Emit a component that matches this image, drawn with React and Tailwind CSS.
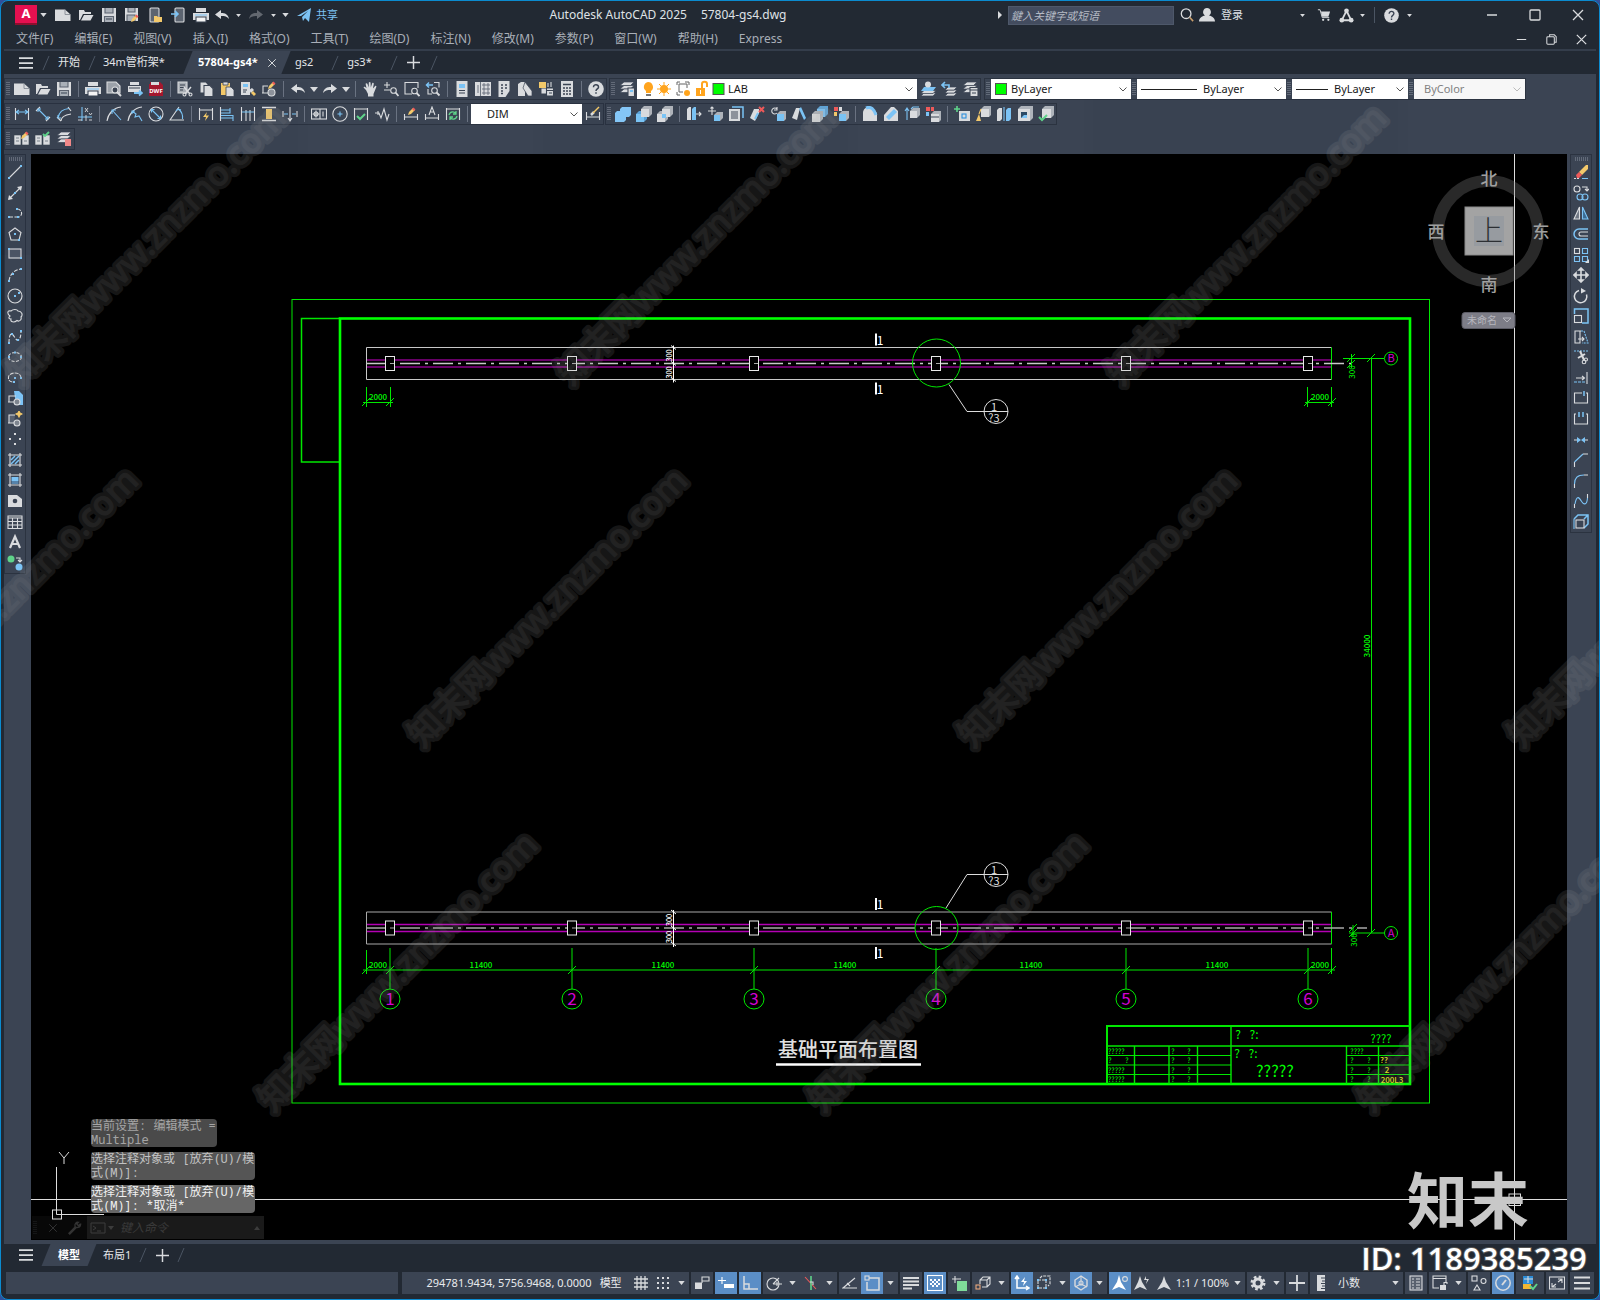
import { Fragment } from 'react';

const W = '#d9dbde';
const B = '#7cc3f5';
const G = '#5fd38a';
const Y = '#f3c96b';
const R = '#ee5a5a';
const D = '#3b4453';

const solid = { fill: W, stroke: 'none' };
const blue = { fill: B, stroke: 'none' };

const stack = (
  <>
    <path d="M5 1h10l-3.500 3.500H1z" fill={W} stroke={D} strokeWidth=".7" />
    <path d="M5 4.500h10L11.500 8H1z" fill={W} stroke={D} strokeWidth=".7" />
    <path d="M5 8h10l-3.500 3.500H1z" fill={W} stroke={D} strokeWidth=".7" />
  </>
);
const box = (x, y, s, front = W, side = '#aeb3ba') => (
  <>
    <path d={`M${x} ${y + 3}l3-3h${s}v${s}l-3 3z`} fill={side} stroke="none" />
    <rect x={x} y={y + 3} width={s} height={s} fill={front} stroke="none" />
  </>
);
const pencil = (x, y) => (
  <>
    <path d={`M${x} ${y + 7}l1-3 4-4 2 2-4 4z`} fill={Y} stroke="none" />
    <path d={`M${x + 4} ${y + 1}l1.500-1.500 2 2-1.500 1.500z`} fill={R} stroke="none" />
  </>
);
const hDim = <path d="M1.500 2v12M14.500 2v12" />;

const ICONS = {
  fresh: (
    <>
      <path d="M0 2.500h10l5.500 5V14H0z" {...solid} />
      <path d="M10 2.500v5h5.500" stroke="#7b828c" strokeWidth=".8" />
    </>
  ),
  open: <path d="M1 13V3h5l1 2h6v2H5L2 13z M6 8h9.500l-3 5.500H3z" {...solid} />,
  save: (
    <>
      <path d="M1 1h14v14H1z" {...solid} />
      <path d="M4 1v5h8V1M3.500 15V9.500h9V15" stroke="#5c6470" fill="#aab0b8" />
      <path d="M5 12h6" stroke={D} />
    </>
  ),
  saveas: (
    <>
      <path d="M1 1h13v13H1z" {...solid} />
      <path d="M4 1v4h7V1M3 14V8h8v6" stroke="#5c6470" fill="#aab0b8" />
      {pencil(7, 8)}
    </>
  ),
  mobopen: (
    <>
      <rect x="3" y="1" width="9" height="14" rx="1" fill="#5c6470" stroke={W} />
      <path d="M7 9h3l1 1h4v5H7z" fill={Y} stroke="none" />
    </>
  ),
  mobsave: (
    <>
      <rect x="5" y="1" width="9" height="14" rx="1" fill="#5c6470" stroke={W} />
      <path d="M1 7h6M5 4l3 3-3 3" stroke={B} strokeWidth="1.600" />
    </>
  ),
  print: (
    <>
      <path d="M3 1h10v4H3z M0 6h16v7H0z" {...solid} />
      <path d="M2 8h12" stroke={B} />
      <path d="M3 10h10v5H3z" fill="#f4f4f4" stroke={D} />
    </>
  ),
  preview: (
    <>
      <path d="M1 1h9l4 4v7H1z" fill="#9da2aa" stroke={W} />
      <circle cx="9" cy="9" r="3" fill={D} />
      <path d="M11 11l4 4" strokeWidth="2" />
    </>
  ),
  publish: (
    <>
      <path d="M3 1h9v3H3z M1 5h13v6H1z" {...solid} />
      <path d="M2 7h11" stroke={D} />
      <path d="M7 12h7M12 9.500l3 2.500-3 2.500" stroke={B} strokeWidth="1.800" />
    </>
  ),
  dwf: (
    <>
      <path d="M1 3h1V1h10l3 3v11H1z" fill="#a5192f" stroke="none" />
      <path d="M3 1h8v3H3z" {...solid} />
      <text x="8" y="12" fontSize="6" fontWeight="700" fill="#fff" stroke="none" textAnchor="middle">DWF</text>
    </>
  ),
  cut: (
    <>
      <path d="M1 1h9v11H1z" fill="#a9aeb5" stroke={W} />
      <path d="M3 4h5M3 6.500h5M3 9h3" stroke={D} />
      <path d="M7 6l6 7M14 6l-6 7" strokeWidth="1.500" />
      <circle cx="7.500" cy="13.500" r="1.500" /><circle cx="13.500" cy="13.500" r="1.500" />
    </>
  ),
  copyclip: (
    <>
      <path d="M2 1h6l2 2v9H2z" fill={W} stroke={D} />
      <path d="M6 4.500h6l3 3v8H6z" fill={W} stroke={D} />
    </>
  ),
  paste: (
    <>
      <path d="M2 2h9v12H2z" fill={Y} stroke="none" />
      <path d="M4 1h5v3H4z" fill={W} stroke={D} strokeWidth=".8" />
      <path d="M7 6h5l3 3v6.500H7z" fill={W} stroke={D} strokeWidth=".8" />
    </>
  ),
  match: (
    <>
      <path d="M1 1h9v13H1z" {...solid} />
      <path d="M3 3h5v3H3z" {...blue} />
      <path d="M3 9h4M3 11h3" stroke={D} />
      <path d="M9 9l3-2 2 2-3 3z" {...solid} /><path d="M11 12l2-2 3 3-2 2z" fill={Y} stroke="none" />
    </>
  ),
  blockedit: (
    <>
      <path d="M7 5H2v7h5M1 12h3" />
      <circle cx="10.500" cy="11.500" r="3.500" fill="#8d939b" />
      {pencil(7, 1)}
    </>
  ),
  undo: <path d="M7 3v3c4 0 7 1 8 6-2-2.500-4-3-8-3v3L1 7.500z" {...solid} />,
  redo: <path d="M9 3v3c-4 0-7 1-8 6 2-2.500 4-3 8-3v3l6-4.500z" {...solid} />,
  pan: (
    <path
      d="M4 9L1.500 6.500c.7-1.300 2-.5 3 .8L3.600 2.800c.6-1 1.600-.6 1.900.3l1.200 3.400.1-5c.6-.9 1.500-.7 1.700 0l.3 5 1.400-4.300c.7-.7 1.600-.3 1.600.5l-.9 4.800 2.300-2.600c.9-.3 1.500.4 1.100 1.200L11.500 13v2.500H6V13z"
      {...solid}
    />
  ),
  zoomrt: (
    <>
      <path d="M1 4h6M4 1v6M1 9h6" />
      <circle cx="10.500" cy="9.500" r="2.800" /><path d="M12.500 11.500l3 3.500" strokeWidth="1.800" />
    </>
  ),
  zoomwin: (
    <>
      <path d="M14 7V1.500H1V13h7" />
      <circle cx="10.500" cy="10" r="2.800" /><path d="M12.500 12l3 3" strokeWidth="1.800" />
    </>
  ),
  zoomprev: (
    <>
      <path d="M9 1.500h5v5M3 8v5h4" />
      <path d="M8 4H2M4 1.500L1.500 4 4 6.500" stroke={B} strokeWidth="1.500" />
      <circle cx="9.500" cy="9.500" r="2.800" /><path d="M11.500 11.500l3 3" strokeWidth="1.800" />
    </>
  ),
  props: (
    <>
      <path d="M2.500 0h11v16h-11z" {...solid} />
      <path d="M5 3h6v4H5z" {...blue} /><path d="M5 9.500h6M5 12h6" stroke={D} />
    </>
  ),
  dc: (
    <>
      <path d="M0 1h16v14H0z" {...solid} />
      <path d="M5.500 1v14M3 4v8M8 3h2v2H8zM12 3h2v2h-2zM8 7h2v2H8zM12 7h2v2h-2zM8 11h2v2H8zM12 11h2v2h-2z" stroke="#626a76" strokeWidth=".9" />
    </>
  ),
  palettes: (
    <>
      <path d="M2.500 0h11v10l-4 6h-7z" {...solid} />
      <path d="M5 4h2M9 4h2M5 7h2M9 7h2M5 10h2M5 12.500h2" stroke={D} strokeWidth="1.500" />
    </>
  ),
  sheet: (
    <>
      <path d="M1 3l3-2h4v14H1z" {...solid} />
      <path d="M8 1l7 9v5h-4L6 7z" fill={W} stroke={D} strokeWidth=".7" />
    </>
  ),
  markup: (
    <>
      <path d="M1 1h7v6H1z" fill={Y} stroke="none" /><path d="M10 2v4M13 1v5M4 8v4h5V8z" fill={W} />
      <path d="M8.500 7h7v8h-7z" fill={W} stroke={D} /><path d="M9 9.500h6M11 12h3" stroke={D} />
    </>
  ),
  calc: (
    <>
      <path d="M2 0h12v16H2z" {...solid} />
      <path d="M4 3.500h8M4 7h2M7 7h2M10 7h2M4 10h2M7 10h2M10 10h2M4 13h2M7 13h2M10 13h2" stroke={D} strokeWidth="1.300" />
    </>
  ),
  help: (
    <>
      <circle cx="8" cy="8" r="7.800" {...solid} />
      <path d="M5.500 6.200c0-3.600 5.200-3.200 5 0-.1 1.700-2.500 1.800-2.500 3.800M8 11.300v1.500" stroke={D} strokeWidth="1.500" />
    </>
  ),
  layers: (
    <>
      {stack}
      <path d="M9 7h6.500v8.500H9z" fill={W} stroke={D} /><path d="M11 9h3v2h-3z" {...blue} />
    </>
  ),
  laycur: (
    <>
      <path d="M4 12h12l-3 3H1z" fill={W} stroke={D} strokeWidth=".7" />
      <path d="M4 9.500h12l-3 3H1z" fill={W} stroke={D} strokeWidth=".7" />
      <path d="M4 6h12l-3 4H1z" {...blue} /><circle cx="8" cy="3.500" r="3" {...solid} />
    </>
  ),
  layprev: (
    <>
      <path d="M7 12h9l-3 3H4z" fill={W} stroke={D} strokeWidth=".7" />
      <path d="M7 9h9l-3 3H4z" fill={W} stroke={D} strokeWidth=".7" />
      <path d="M7 6h9l-3 3H4z" fill={W} stroke={D} strokeWidth=".7" />
      <path d="M1 4h7v3M4 1L1 4l3 3" stroke={B} strokeWidth="1.600" />
    </>
  ),
  laystate: (
    <>
      {stack}
      <path d="M8 6.500h8v9H8z" fill={W} stroke={D} /><path d="M8 9h8M10 12h4" stroke={D} />
    </>
  ),
  dimlin: <>{hDim}<path d="M2 6h12M5 4L2 6l3 2M11 4l3 2-3 2" stroke={B} /></>,
  dimali: (
    <>
      <path d="M1 5l4-4M11 15l4-4" />
      <path d="M3.500 3.500l9 9M3 6l0-3h3M13 10v3h-3" stroke={B} />
    </>
  ),
  dimarc: <><path d="M5 15c0-4 3-6 10-7M1 11l4 4M12 1l3 4" /><path d="M2 12c1-6 4-9 11-9.500M2 9v3h3" stroke={B} /></>,
  dimord: (
    <>
      <path d="M5 15V1M1 11h14" stroke={B} />
      <path d="M1 14h4M9 9v6M12 14h3M8 2l3 4M11 2L8 6M12 7l1.500 2L15 7" strokeWidth=".9" />
    </>
  ),
  dimrad: <><path d="M1 15C2 8 7 2 15 1" /><path d="M6 4l9 10M6 8V4h4" stroke={B} /></>,
  dimjog: <><path d="M1 15C2 8 7 2 15 1" /><path d="M5 5l4 3-1 3 4-1 3 5M5 8V5h3" stroke={B} /></>,
  dimdia: <><circle cx="8" cy="8" r="7" /><path d="M3 3l10 10M3.500 6.500v-3h3M12.500 9.500v3h-3" stroke={B} /></>,
  dimang: <><path d="M10 1L1 14h14" /><path d="M9 3c3 2 5 6 4.500 10M7 5l2-2 3 1" stroke={B} /></>,
  qdim: <>{hDim}<path d="M2 4h12" /><path d="M9 6l-4 5h3l-1 4 4-5.500H8z" fill={Y} stroke="none" /></>,
  dimbase: <><path d="M1.500 1v14" /><path d="M2 4h9M2 12h12M11 2v5h-9M14 9v6M2 9.500h12" stroke={B} /></>,
  dimcont: <><path d="M1.500 1v14M6 4v11M10 4v11M14.500 1v14" /><path d="M2 6h12" stroke={B} /></>,
  dimspace: <><path d="M1 1.500h14M1 14.500h14" strokeWidth="1.500" /><path d="M5 3h6v10H5z" fill={Y} stroke="none" /></>,
  dimbreak: <><path d="M1 5v6M15 5v6M8 1v14M6 12l2 3 2-3" /><path d="M2 8h4M10 8h4" stroke={B} /></>,
  tol: (
    <>
      <rect x="0.500" y="3" width="15" height="10" /><path d="M9 3v10M12 5.500v5" />
      <circle cx="5" cy="8" r="2" /><path d="M5 4.500v7M1.500 8h7" />
    </>
  ),
  center: <><circle cx="8" cy="8" r="7.200" /><path d="M8 5.500v5M5.500 8h5" stroke={B} /></>,
  inspect: <>{hDim}<path d="M2 3h12" /><path d="M4 10l3 3 5-5" stroke={G} strokeWidth="2" /></>,
  jogline: <path d="M1 7h4l2 5 3-9 3 11 2-6M4 5v4" />,
  dimedit: <><path d="M1.500 8v6M14.500 8v6M2 11h12" />{pencil(5, 2)}</>,
  dimtedit: <path d="M1.500 8v6M14.500 8v6M2 12h12M5 9l3-8 3 8M6 6h4" />,
  dimupd: <>{hDim}<path d="M2 3h12" /><path d="M4 9c1-4 6-4 7-1M12 10c-1 4-6 4-7 1M11 5v3H8M5 14v-3h3" stroke={G} strokeWidth="1.300" /></>,
  dimstyle: <><path d="M1.500 6v8M14.500 6v8M2 11h12" /><path d="M6 9l3-3" strokeWidth="2.500" /><path d="M8 7l6-6" stroke={Y} strokeWidth="1.500" /></>,
  union: <path d="M0 7l2-2h3V3l2-2h9v8l-2 2h-3v3l-2 2H0z" fill="#84c6f7" stroke="none" />,
  subtract: <>{box(0, 5, 8, B, '#5ea4d8')}{box(5, 0, 8)}</>,
  intersect: <>{box(0, 5, 8)}{box(5, 0, 8)}<rect x="5" y="8" width="4" height="4" {...blue} /></>,
  extrude: <><path d="M1 3l2-2h2v13H1z" {...solid} /><path d="M6 3l2-2h2v13H6z" {...blue} /><path d="M10 8h5M13 6l2 2-2 2" /></>,
  movef: <><path d="M5 1v8M1 5h8M3.500 2.500L5 1l1.500 1.500" />{box(7, 6, 6, B)}</>,
  offsetf: <><path d="M4 1h11v11" stroke={B} strokeWidth="1.500" /><rect x="2" y="4" width="9" height="10" fill="#8d939b" strokeWidth="2" /></>,
  deletef: <><path d="M1 12l4-9h5v4l-4 8z" {...solid} /><path d="M6 13l3-6" stroke={B} strokeWidth="2" /><path d="M10 1l5 5M15 1l-5 5" stroke={R} strokeWidth="2" /></>,
  rotatef: <><path d="M7 3a3 3 0 1 0 0 4M7 1v3H4" />{box(7, 5, 7, B)}</>,
  taperf: <><path d="M1 12l4-10h4L6 14z" {...solid} /><path d="M8 3l2-2 5 11-2 2z" {...blue} /></>,
  copyf: <>{box(5, 0, 8, B, '#5ea4d8')}{box(0, 5, 8)}</>,
  colorf: <><path d="M1 1h4v4H1z" fill={R} stroke="none" /><path d="M6 1h3v4H6z" {...solid} /><path d="M1 6h3v4H1z" fill={Y} stroke="none" />{box(6, 5, 7, B)}</>,
  fillete: <><path d="M1 15V7c0-4 3-6 7-6l7 6v8z" {...solid} /><path d="M4 2c5-2 8 1 10 7" stroke={B} strokeWidth="3" /></>,
  chamfere: <><path d="M1 15V9l7-8h3l4 4v10z" {...solid} /><path d="M3 11l8-8 3 3-8 8z" {...blue} /></>,
  copye: <><path d="M3 3v11M1 5l2-3 2 3M7 3l2-2h6" stroke={B} />{box(6, 2, 7)}</>,
  colore: <><path d="M1 1h4v4H1zM6 1h3v4H6z" fill={R} stroke="none" /><path d="M1 6h3v4H1z" {...blue} />{box(6, 5, 8)}<path d="M6 11h8" stroke={D} /></>,
  imprint: <><path d="M3 0v6M0 3h6" stroke={G} strokeWidth="1.600" /><rect x="5" y="5" width="11" height="10" {...solid} /><rect x="8" y="8" width="4" height="4" stroke="#2d8fdd" /></>,
  clean: <>{box(6, 0, 8)}<path d="M4 8l-3 7h5z" fill={Y} stroke="none" /><path d="M4 8l2-5" stroke={Y} /></>,
  separate: <><path d="M1 4l2-2h3v11l-2 2H1z" {...solid} /><path d="M10 4l2-2h3v11l-2 2h-3z" {...blue} /><path d="M8 1v14" stroke={B} /></>,
  shell: <>{box(1, 0, 12)}<rect x="4" y="6" width="6" height="6" fill="#2b4a66" stroke="none" /><path d="M4 12l3-3h3v3z" {...blue} /></>,
  check: <>{box(4, 0, 9)}<path d="M1 11l3 3 5-5" stroke={G} strokeWidth="2" /></>,
  refedit: <><path d="M0 4h7v10H0z" fill={W} stroke={D} strokeWidth=".6" /><path d="M8 4h7v10H8z" fill={W} stroke={D} strokeWidth=".6" /><path d="M2 7h3M2 10h3M10 10h3" stroke="#7b828c" />{pencil(7, 1)}</>,
  refcheck: <><path d="M0 4h7v10H0z" fill={W} stroke={D} strokeWidth=".6" /><path d="M8 4h7v10H8z" fill={W} stroke={D} strokeWidth=".6" /><path d="M2 7h3M2 10h3M10 10h3" stroke="#7b828c" /><path d="M8 3l2 2 4-4" stroke={G} strokeWidth="1.800" /></>,
  refclose: <>{stack}<rect x="9" y="8" width="6" height="7" fill="#f08a8a" stroke="none" /></>,
  line: <><path d="M2 14L14 2" /><path d="M1 13h2v2H1zM13 1h2v2h-2z" {...blue} /></>,
  xline: <><path d="M2 14L14 2" /><path d="M1 15l1-5 4 4zM15 1l-1 5-4-4z" {...solid} /><path d="M7 7h2v2H7z" {...blue} /></>,
  pline: <><path d="M2 12h8M10 4c6 0 6 8 1 8" strokeDasharray="4 1.500" /><path d="M1 11h2v2H1zM10 11h2v2h-2zM9 3h2v2H9z" {...blue} /></>,
  polygon: <><path d="M8 2l6 4.500L12 14H4L2 6.500z" /><path d="M7 7h2v2H7zM11 13h2v2h-2z" {...blue} /></>,
  rect: <><rect x="2" y="3" width="12" height="9" fill="#4c5565" /><path d="M1 2h2v2H1zM13 11h2v2h-2z" {...blue} /></>,
  arc: <><path d="M2 14C3 7 7 3 14 2" strokeDasharray="4 1.500" /><path d="M1 13h2v2H1zM5 6h2v2H5zM13 1h2v2h-2z" {...blue} /></>,
  circle: <><circle cx="8" cy="8" r="7" /><path d="M7 7h2v2H7zM11 4h2v2h-2z" {...blue} /></>,
  cloud: <path d="M3 8C0 6 0 2 4 3c2-2 6-2 7 0 4 0 5 4 3 6 1 3-2 5-4 3.500C7 15 3 14 4 11c-2 0-3-1-1-3z" />,
  spline: <><path d="M2 14C2 8 3 4 5 5s4 7 6 6c2 0 3-4 3-9" strokeDasharray="4 1.500" /><path d="M1 13h2v2H1zM4 4h2v2H4zM10 10h2v2h-2zM13 1h2v2h-2z" {...blue} /></>,
  ellipse: <><ellipse cx="8" cy="8" rx="6.500" ry="4.500" strokeDasharray="3 1.500" /><path d="M7 2.500h2v2H7zM1 7h2v2H1zM13 7h2v2h-2z" {...blue} /></>,
  ellarc: <><path d="M14 8C14 1 2 2 1.500 7 1 10 3 12 6 12" strokeDasharray="4 1" /><path d="M7 7h2v2H7zM13 7h2v2h-2zM6 11h2v2H6z" {...blue} /></>,
  insert: <><path d="M7 1h5l4 4v10H9z" {...blue} /><path d="M9 6H2v6h5M1 12h3" /><circle cx="10" cy="12" r="3" fill="#7d848e" /></>,
  block: <><path d="M8 4H2v8h5M1 12h3" fill="#596271" /><circle cx="10" cy="12" r="3" fill="#7d848e" /><path d="M12 0l1 2 2 1-2 1-1 2-1-2-2-1 2-1z" fill={Y} stroke={Y} /></>,
  point: <path d="M7 2h2v2H7zM7 12h2v2H7zM2 7h2v2H2zM12 7h2v2h-2z" {...solid} />,
  hatch: <><path d="M3 1v14M13 1v14M1 3h14M1 13h14" /><path d="M4 8l4-4M4 12l8-8M8 12l4-4" stroke={B} strokeWidth="1.500" /></>,
  gradient: <><path d="M3 1v14M13 1v14M1 3h14M1 13h14" /><path d="M4.500 5h7v4h-7z" {...blue} /><path d="M4.500 9h7v3h-7z" fill="#5683aa" stroke="none" /></>,
  region: <><path d="M1 2h9l5 4v8H1z" {...solid} /><circle cx="8" cy="8" r="2.300" fill={D} stroke="none" /></>,
  table: <path d="M1 2h14v12.500H1zM1 4h14M1 7.500h14M1 11h14M5.500 4v10M10.500 4v10" />,
  mtext: <path d="M3 14L8 2.500 13 14M5 10h6" strokeWidth="2.200" />,
  addsel: <><circle cx="4" cy="4" r="3.500" fill={G} stroke="none" /><circle cx="12" cy="12" r="3.500" {...blue} /><path d="M9 3h4v4M11 5l2 2 2-2" /></>,
  erase: <><path d="M1 14.500h5" strokeDasharray="2 1" /><path d="M9 14.500h6" stroke={B} /><path d="M6 8l7-7h2v4l-6 6z" fill={Y} stroke="none" /><path d="M3 11l3-3 3 3-3 3H4z" fill={R} stroke="none" /></>,
  copy: <><circle cx="4" cy="4" r="3" /><path d="M9 2h5v4M12 4l2 2 2-2" /><g stroke={B}><circle cx="7" cy="12" r="3" /><circle cx="12" cy="12" r="3" /></g></>,
  mirror: <><path d="M6.500 2v12H1z" fill="#6f7783" /><path d="M9.500 2v12H15z" fill="#3c6b93" stroke={B} /></>,
  offset: <><path d="M15 3H6a5 5 0 0 0 0 10h9" stroke={B} strokeWidth="1.500" /><path d="M15 6H8a2 2 0 0 0 0 4h7" /></>,
  array: <><rect x="1.500" y="1.500" width="5" height="5" /><path d="M9.500 1.500h5v5h-5zM1.500 9.500h5v5h-5zM9.500 9.500h5v5h-5z" stroke={B} /><path d="M16 12v4h-4z" {...solid} /></>,
  move: <path d="M8 1v14M1 8h14M6 3l2-2 2 2zM6 13l2 2 2-2zM3 6L1 8l2 2zM13 6l2 2-2 2z" fill={W} strokeWidth="1.600" />,
  rotate: <><path d="M6 2.500a6.200 6.200 0 1 0 7.500 4" strokeWidth="1.500" /><path d="M8 0l5 3-5 2.500z" {...solid} /></>,
  scale: <><path d="M1.500 6V1h13.500v14H9" stroke={B} strokeWidth="1.500" /><rect x="1.500" y="7.500" width="7" height="7" /></>,
  stretch: <><path d="M8 2H2v12h5V2" /><path d="M8 2h3l4 12H9" stroke={B} strokeDasharray="2 1" /><path d="M5 10h6M9 8l2 2-2 2" /></>,
  trim: <><path d="M1 2h14" stroke={B} strokeDasharray="2 1" /><path d="M7 2l4 9M12 5L5 9" strokeWidth="2" /><circle cx="11" cy="13" r="1.800" /><circle cx="13" cy="10.500" r="1.500" /></>,
  extend: <><path d="M14 2v12M3 8h8M9 6l2.500 2L9 10" /><path d="M1 12h12" stroke={B} strokeDasharray="3 1" /></>,
  breakpt: <><path d="M9 3H1.500v10h13V3H13" /><path d="M11 1v5" stroke={B} strokeWidth="1.500" /></>,
  breakk: <><path d="M3 3H1.500v10h13V3H13" /><path d="M6 1v5M10 1v5" stroke={B} strokeWidth="1.500" /></>,
  join: <><path d="M1 8h4M11 8h4" /><path d="M4 5l4 3-4 3zM12 5L8 8l4 3z" {...blue} /></>,
  chamfer: <><path d="M1.500 15v-5M10 2h5" /><path d="M1.500 10L10 2" stroke={B} /></>,
  fillet: <><path d="M1.500 15v-4M11 2h4" /><path d="M1.500 11c0-6 3-9 9.500-9" stroke={B} /></>,
  blend: <><path d="M1.500 15v-4M14.500 5V1" /><path d="M2 11C4 0 7 6 9 9s5 3 5.500-4" stroke={B} /></>,
  explode: <><path d="M1 5l4-4h10v9l-4 4M11 5l4-4" stroke={B} strokeWidth="1.500" /><rect x="3" y="6" width="8" height="8" /><path d="M1 5v10" stroke={B} /></>,
  grid: <path d="M4 1v14M8 1v14M12 1v14M1 4h14M1 8h14M1 12h14" strokeWidth="1.300" />,
  snap: <path d="M2 3h12M2 8h12M2 13h12" strokeDasharray="2 3" strokeWidth="2" />,
  infer: <><path d="M1 8h7v6H1z" {...solid} /><path d="M8 8V2h7v4H8M1 8h7" /></>,
  dyn: <><path d="M4 2v7M0 5.500h8" stroke="#fff" /><path d="M6 9h10v4H6z" fill="#fff" stroke="none" /></>,
  ortho: <path d="M2 1v13h14M2 9h5v5" strokeWidth="1.500" />,
  polar: <><circle cx="7" cy="9" r="6" /><path d="M7 9l6-6M7 9h9M11 7v4" /></>,
  iso: <><path d="M2 2l11 12" stroke={R} /><path d="M8 1v14" stroke={G} strokeWidth="1.600" /><path d="M7 7h3v3" /></>,
  track: <><path d="M15 13H1L13 3" /><path d="M5 8l3 3" stroke={W} /></>,
  osnap: <><path d="M5 3h10v12H3V7" strokeWidth="1.500" /><rect x="1" y="1" width="4" height="4" /></>,
  lwt: <path d="M0 3h16M0 6.500h16M0 10h16M0 13.500h9" strokeWidth="1.800" />,
  transp: <><rect x="0.500" y="0.500" width="15" height="15" fill="none" stroke="#fff" /><path d="M3 4h2v2H3zM7 4h2v2H7zM11 4h2v2h-2zM5 6h2v2H5zM9 6h2v2H9zM3 8h2v2H3zM7 8h2v2H7zM11 8h2v2h-2zM5 10h2v2H5zM9 10h2v2H9z" fill="#fff" stroke="none" /></>,
  cycling: <><path d="M4 1v7M1 4h9" /><rect x="6" y="6" width="10" height="10" fill="#7fdc9a" stroke="none" /></>,
  osnap3d: <><path d="M5 9V5l3-3h7v7l-3 3H7M5 5h7v7M12 5l3-3" /><rect x="1" y="10" width="4" height="4" stroke="#e8a77c" /></>,
  ucs: <><path d="M3 1v12h12M1 4l2-3 2 3M12 11l3 2-3 2" stroke="#fff" strokeWidth="1.500" /><path d="M11 2L7 7h3l-1 4 4-5h-3z" fill="#fff" stroke="none" /></>,
  filter: <><path d="M2 5h8v8H2zM4 3l2-2h8v8l-2 2" strokeDasharray="3 1" /><path d="M1 4h2v2H1zM9 4h2v2H9zM1 12h2v2H1zM9 12h2v2H9z" {...blue} /></>,
  gizmo: <><path d="M8 1l6 4v6l-6 4-6-4V5z" strokeWidth="1.400" /><path d="M8 1v8M8 9l6 3M8 9l-6 3" /><circle cx="8" cy="8" r="2" /></>,
  anno: <><path d="M7 0l2 7 5 8-7-3-7 3 5-8z" fill="#fff" stroke="none" /><circle cx="13" cy="4" r="2.400" /></>,
  annoauto: <><path d="M6 1l2 6 5 8-7-3-6 3 4-8z" {...solid} /><path d="M12 1l-2 4h3l-1 4 3-5h-3z" {...solid} /></>,
  annoone: <path d="M8 1l2 6 5 8-7-3-7 3 5-8z" {...solid} />,
  gear: <><circle cx="8" cy="8" r="6" stroke={W} strokeWidth="3" strokeDasharray="2.500 2.200" /><circle cx="8" cy="8" r="4" stroke={W} strokeWidth="3" /></>,
  plus: <path d="M8 0v16M0 8h16" strokeWidth="1.800" />,
  ruler: <><path d="M4 0h8v16H4z" {...solid} /><path d="M12 3H8M12 6H9M12 8.500H8M12 11H9M12 13.500H8" stroke={D} /></>,
  quickp: <><rect x="2" y="1" width="12" height="14" fill="#59616e" /><path d="M4 4h2M4 7h2M4 10h2M4 13h2M8 4h4M8 7h4M8 10h4M8 13h4" /></>,
  lockui: <><path d="M7 13H1V1h13v6M1 3.500h13" /><path d="M8 10h6v5H8z" {...solid} /><path d="M12 10V7.500h3V9" /></>,
  isolate: <><rect x="1" y="1" width="5" height="5" /><circle cx="12.500" cy="6" r="2.500" /><path d="M6 10l3 5H3z" /></>,
  perf: <><circle cx="8" cy="8" r="7.200" strokeWidth="1.500" /><path d="M7 10l4-5" strokeWidth="2" /></>,
  trusted: <><path d="M1 1h10v8H1z" fill="#2b8bd6" stroke="none" /><path d="M1 9h8v5H1z" fill="#f2b632" stroke="none" /><path d="M6 1v7M2 4h9" /><path d="M8 11l3 3 4-5" stroke={G} strokeWidth="2" /></>,
  full: <><rect x="0.500" y="2" width="15" height="12" /><path d="M9 4h4v4M13 4l-4 3M3 8v4h4M3 12l4-3" /></>,
  menu: <path d="M0 2.500h16M0 8h16M0 13.500h16" strokeWidth="2" />,
  send: <path d="M1 9L15 1l-2 14-4-4-2 3-1-4 6-6-7 5z" {...blue} />,
  search: <><circle cx="7" cy="6.500" r="5.500" strokeWidth="1.500" /><path d="M11 10.500l4 4.500" stroke="#c89d6a" strokeWidth="1.800" /></>,
  user: <path d="M8 1a4 4 0 0 1 2 7.400c3 .6 6 2.600 6 6H0c0-3.400 3-5.400 6-6A4 4 0 0 1 8 1z" {...solid} />,
  cart: <><path d="M1 2h2.500l2.500 9h8" /><path d="M4.500 4H15l-2 6H6z" {...solid} /><circle cx="7" cy="13.500" r="1.300" {...solid} /><circle cx="13" cy="13.500" r="1.300" {...solid} /></>,
  apps: <><path d="M8 3L3 13h10z" strokeWidth="2" /><circle cx="8" cy="3" r="2.500" {...solid} /><circle cx="3" cy="13" r="2.500" {...solid} /><circle cx="13" cy="13" r="2.500" {...solid} /></>,
  min: <path d="M3 8h10" strokeWidth="1.300" />,
  max: <rect x="3" y="3" width="10" height="10" rx="1" strokeWidth="1.300" />,
  restore: <><rect x="3" y="5" width="8" height="8" rx="1" /><path d="M6 5V3h5l2 2v6h-2" /></>,
  close: <path d="M3 3l10 10M13 3L3 13" strokeWidth="1.300" />,
};

const LABELS = {
  fresh: '新建', open: '打开', save: '保存', print: '打印', undo: '放弃', redo: '重做', help: '帮助', close: '关闭', menu: '菜单',
};

function Icon({ name, className = 'size-4' }) {
  return (
    <svg viewBox="0 0 16 16" className={`shrink-0 ${className}`} fill="none" stroke={W} strokeWidth="1.1" aria-hidden="true">
      {ICONS[name]}
    </svg>
  );
}

function Tool({ name, className = 'h-5 w-[21px]', icon }) {
  return (
    <button type="button" aria-label={LABELS[name] || name} className={`flex shrink-0 items-center justify-center hover:bg-[#56627a] ${className}`}>
      <Icon name={name} className={icon} />
    </button>
  );
}

function Caret({ className = 'w-[11px]', size = 'h-1 w-[7px]' }) {
  return (
    <button type="button" aria-label="更多" className={`flex h-5 shrink-0 items-center justify-center ${className}`}>
      <svg viewBox="0 0 8 5" className={size} fill={W}><path d="M0 0h8L4 5z" /></svg>
    </button>
  );
}

const Grip = () => (
  <svg className="mx-px h-4 w-1 shrink-0" viewBox="0 0 4 16"><path d="M1 1v14M3 1v14" stroke="#8a92a0" strokeDasharray="1 1" /></svg>
);

function Bar({ items, grip = true, children }) {
  return (
    <div role="toolbar" className="flex h-[22px] items-center border border-[#2b3340] bg-[#3b4453]">
      {grip && <Grip />}
      {items.map((it, i) => (
        <Fragment key={i}>
          {it === '|' && <span className="flex w-2 shrink-0 justify-center"><i className="h-4 w-px bg-[#6a7382]" /></span>}
          {it === 'v' && <Caret size="h-[5px] w-2" />}
          {it !== '|' && it !== 'v' && <Tool name={it} />}
        </Fragment>
      ))}
      {children}
    </div>
  );
}

function Combo({ label, value, className, pad, disabled, children }) {
  return (
    <label className={`relative flex h-5 shrink-0 items-center ${disabled ? 'bg-[#f7f7f7]' : 'bg-white'} ${className}`}>
      {children}
      <select
        aria-label={label}
        disabled={disabled}
        className={`h-full w-full appearance-none bg-transparent text-[11px] ${pad} ${disabled ? 'text-[#828282]' : 'text-[#1b1b1b]'}`}
      >
        <option>{value}</option>
      </select>
      <svg viewBox="0 0 8 5" className="pointer-events-none absolute right-1 top-2 h-[5px] w-2" fill="none" stroke={disabled ? '#bbb' : '#555'}>
        <path d="M.5.5L4 4 7.500.5" />
      </svg>
    </label>
  );
}

const Slash = () => (
  <svg viewBox="0 0 8 16" className="h-4 w-2 shrink-0" stroke="#4b5563" fill="none"><path d="M1 15L7 1" /></svg>
);

const QUICK = ['fresh', 'open', 'save', 'saveas', 'mobopen', 'mobsave', 'print'];
const MENUS = ['文件(F)', '编辑(E)', '视图(V)', '插入(I)', '格式(O)', '工具(T)', '绘图(D)', '标注(N)', '修改(M)', '参数(P)', '窗口(W)', '帮助(H)', 'Express'];

function TitleBar() {
  return (
    <header className="flex h-7 items-center">
      <button type="button" aria-label="应用程序菜单" className="ml-[11px] flex h-5 w-[22px] items-center justify-center border-b-2 border-[#8d0f2e] bg-[#e51050] text-[13px] font-bold text-white">A</button>
      <Caret className="w-3" />
      <div className="ml-[2px] flex">
        {QUICK.map((n) => <Tool key={n} name={n} className="h-5 w-[23px]" />)}
        <Tool name="undo" className="h-5 w-5" />
        <Caret className="w-3" size="h-[3px] w-[5px]" />
        <Tool name="redo" className="h-5 w-[23px] opacity-35" />
        <Caret className="w-3" size="h-[3px] w-[5px]" />
        <Caret className="w-[13px]" />
      </div>
      <button type="button" className="ml-1 flex items-center gap-1 text-[11px] text-[#7cc3f5]">
        <Icon name="send" /> 共享
      </button>
      <h1 className="flex flex-1 justify-center gap-[14px] text-[12px] text-[#dfe2e6]">
        <span>Autodesk AutoCAD 2025</span>
        <span>57804-gs4.dwg</span>
      </h1>
      <div className="flex items-center">
        <svg viewBox="0 0 4 8" className="mr-[6px] h-2 w-1" fill={W}><path d="M0 0l4 4-4 4z" /></svg>
        <input aria-label="搜索" placeholder="鍵入关键字或短语" className="h-[19px] w-[166px] border border-[#4e586a] bg-[#434c5f] px-[2px] text-[11px] italic placeholder:text-[#b4bac4]" />
        <Tool name="search" className="h-5 w-[25px]" icon="size-[14px]" />
        <button type="button" className="flex items-center gap-[6px] text-[11px] text-[#dfe2e6]">
          <Icon name="user" /> 登录
        </button>
        <Caret className="ml-[53px] w-3" size="h-[3px] w-[5px]" />
        <Tool name="cart" className="ml-1 h-5 w-[23px]" icon="size-[14px]" />
        <Tool name="apps" className="h-5 w-[22px]" icon="size-[15px]" />
        <Caret size="h-[3px] w-[5px]" />
        <i className="mx-[6px] h-4 w-px bg-[#4b5563]" />
        <Tool name="help" className="h-5 w-5" icon="size-[15px]" />
        <Caret className="w-4" size="h-[3px] w-[5px]" />
        <Tool name="min" className="ml-16 h-5 w-[22px]" />
        <Tool name="max" className="ml-[21px] h-5 w-[22px]" />
        <Tool name="close" className="ml-[21px] mr-[7px] h-5 w-[22px]" />
      </div>
    </header>
  );
}

function MenuBar() {
  return (
    <nav className="flex h-[22px] items-center border-b-2 border-[#343d4b] pl-3 text-[12px] text-[#a9afb8]">
      <div className="flex flex-1 gap-[21px]">
        {MENUS.map((m) => <button key={m} type="button">{m}</button>)}
      </div>
      <Tool name="min" className="h-5 w-[30px]" icon="size-[15px]" />
      <Tool name="restore" className="h-5 w-[30px]" icon="size-[15px]" />
      <Tool name="close" className="h-5 w-[30px]" icon="size-[15px]" />
    </nav>
  );
}

function FileTabs() {
  return (
    <div className="flex h-[23px] items-center pl-[14px] text-[11px] text-[#e4e6e9]">
      <button type="button" aria-label="菜单" className="mr-2"><Icon name="menu" className="h-[14px] w-4" /></button>
      <Slash />
      <button type="button" className="mx-2">开始</button>
      <Slash />
      <button type="button" className="ml-[7px] w-[85px] text-left">34m管桁架*</button>
      <div className="relative flex h-full w-[98px] items-center justify-between pl-[10px] pr-2">
        <span className="absolute inset-0 -skew-x-[22deg] bg-[#3b4453]" />
        <button type="button" className="relative whitespace-nowrap font-bold text-white">57804-gs4*</button>
        <Tool name="close" className="relative size-3" icon="size-3" />
      </div>
      <button type="button" className="ml-[9px] mr-[18px]">gs2</button>
      <Slash />
      <button type="button" className="ml-2 mr-[18px]">gs3*</button>
      <Slash />
      <Tool name="plus" className="mx-2 size-4" icon="size-[13px]" />
      <Slash />
    </div>
  );
}

const STD = ['fresh', 'open', 'save', '|', 'print', 'preview', 'publish', 'dwf', '|', 'cut', 'copyclip', 'paste', 'match', 'blockedit', '|', 'undo', 'v', 'redo', 'v', '|', 'pan', 'zoomrt', 'zoomwin', 'zoomprev', '|', 'props', 'dc', 'palettes', 'sheet', 'markup', 'calc', '|', 'help'];
const DIMS = ['dimlin', 'dimali', 'dimarc', 'dimord', '|', 'dimrad', 'dimjog', 'dimdia', 'dimang', '|', 'qdim', 'dimbase', 'dimcont', 'dimspace', 'dimbreak', '|', 'tol', 'center', 'inspect', 'jogline', '|', 'dimedit', 'dimtedit', 'dimupd', '|'];
const SOLIDS = ['union', 'subtract', 'intersect', '|', 'extrude', 'movef', 'offsetf', 'deletef', 'rotatef', 'taperf', 'copyf', 'colorf', '|', 'fillete', 'chamfere', 'copye', 'colore', '|', 'imprint', 'clean', 'separate', 'shell', 'check'];

function Toolbars() {
  return (
    <div className="flex flex-col gap-[3px] bg-[#3b4453] py-1">
      <div className="flex">
        <Bar items={STD} />
        <div className="ml-[2px]">
          <Bar items={['layers']}>
            <Combo label="图层" value="LAB" className="w-[280px]" pad="pl-[91px]">
              <svg viewBox="0 0 86 18" className="pointer-events-none absolute left-[5px] h-[18px] w-[86px]" fill="none">
                <path d="M6 2a5 5 0 0 1 3 9v2H4v-2a5 5 0 0 1 2-9z" fill="#ffa51f" /><path d="M4 15h5" stroke="#777" strokeWidth="2" />
                <circle cx="22" cy="9" r="4" fill="#ffa51f" />
                <path d="M22 2v14M15 9h14M17 4l10 10M27 4L17 14" stroke="#ffa51f" />
                <path d="M38 2h-3v3M43 2h4v3M35 12v3h3M37 4h8v4M37 4v8h4" stroke="#666" /><circle cx="45" cy="13" r="3" fill="#ffa51f" />
                <path d="M54 8h9v8h-9z" fill="#ffa51f" /><path d="M60 8V4c0-3 5-3 5 0v3" stroke="#ffa51f" strokeWidth="2" /><path d="M58.500 10v4" stroke="#fff" />
                <rect x="71" y="3.500" width="11" height="11" fill="#0f0" stroke="#555" />
              </svg>
            </Combo>
            <Tool name="laycur" /><Tool name="layprev" /><Tool name="laystate" />
          </Bar>
        </div>
        <div className="ml-[3px]">
          <Bar items={[]}>
            <Combo label="颜色" value="ByLayer" className="w-[140px]" pad="pl-5">
              <i className="absolute left-1 top-1 size-3 border border-[#555] bg-[#00ff00]" />
            </Combo>
            <Grip />
            <Combo label="线型" value="ByLayer" className="w-[149px]" pad="pl-[66px]">
              <i className="absolute left-1 top-[10px] h-px w-14 bg-[#222]" />
            </Combo>
            <Grip />
            <Combo label="线宽" value="ByLayer" className="w-[116px]" pad="pl-[42px]">
              <i className="absolute left-1 top-[10px] h-px w-8 bg-[#222]" />
            </Combo>
            <Grip />
            <Combo label="打印样式" value="ByColor" className="w-[111px]" pad="pl-[10px]" disabled />
          </Bar>
        </div>
      </div>
      <div className="flex">
        <Bar items={DIMS}>
          <Combo label="标注样式" value="DIM" className="w-[111px]" pad="pl-[16px]" />
          <Tool name="dimstyle" />
        </Bar>
        <div className="ml-px"><Bar items={SOLIDS} /></div>
      </div>
      <div className="flex"><Bar items={['refedit', 'refcheck', 'refclose']} /></div>
    </div>
  );
}

const DRAW = ['line', 'xline', 'pline', 'polygon', 'rect', 'arc', 'circle', 'cloud', 'spline', 'ellipse', 'ellarc', 'insert', 'block', 'point', 'hatch', 'gradient', 'region', 'table', 'mtext', 'addsel'];
const MODIFY = ['erase', 'copy', 'mirror', 'offset', 'array', 'move', 'rotate', 'scale', 'stretch', 'trim', 'extend', 'breakpt', 'breakk', 'join', 'chamfer', 'fillet', 'blend', 'explode'];

function SideBar({ items, className }) {
  return (
    <div role="toolbar" className={`flex w-[22px] flex-col items-center border border-[#2b3340] ${className}`}>
      <svg className="mt-[2px] h-[5px] w-[13px] shrink-0" viewBox="0 0 13 5"><path d="M0 1h13M0 3h13" stroke="#8a92a0" strokeDasharray="1 1" /></svg>
      {items.map((n) => <Tool key={n} name={n} className="w-5 flex-1" />)}
    </div>
  );
}

const COLS = [390, 572, 754, 936, 1126, 1308];
const GREEN = '#00e800';
const TICK = 'M-4 4l8-8';

function Txt({ x, y, size = 9, fill = '#00ff00', rotate, anchor = 'middle', weight, children }) {
  return (
    <text x={x} y={y} fontSize={size} fontWeight={weight} fill={fill} stroke="none" textAnchor={anchor} transform={rotate ? `rotate(-90 ${x} ${y})` : undefined}>
      {children}
    </text>
  );
}

function Beam({ y, lineColor, purple, tail }) {
  const mid = y + 16;
  return (
    <g fill="none">
      <path d={`M1331.500 ${y}H366.500V${y + 32}H1331.500`} stroke={lineColor} />
      <path d={`M1331.500 ${y}v32`} stroke={GREEN} />
      <path d={`M367 ${mid - 3.5}H1331M367 ${mid + 3.5}H1331`} stroke={purple} strokeWidth="1.500" />
      <path d={`M367 ${mid}H${tail}`} stroke={lineColor} strokeWidth="1.400" strokeDasharray="20 5 3 5" />
      {COLS.map((x) => <rect key={x} x={x - 4.5} y={mid - 7} width="9" height="14" fill="#000" stroke="#e8e8e8" />)}
      {COLS.map((x) => <path key={x} d={`M${x} ${mid}h4`} stroke="#aaa" />)}
      <path d={`M673.500 ${y - 2}v37`} stroke="#fff" />
      <path d={`M671 ${y - 2}l5 4M671 ${mid - 2}l5 4M671 ${y + 30}l5 4`} stroke="#fff" />
      <Txt x={672} y={y + 8} size={7} weight={500} fill="#fff" rotate>300</Txt>
      <Txt x={672} y={y + 25} size={7} weight={500} fill="#fff" rotate>300</Txt>
      <path d={`M876 ${y - 14}v12M876 ${y + 35}v12`} stroke="#fff" strokeWidth="2" />
      <Txt x={880} y={y - 3} size={12} fill="#fff">1</Txt>
      <Txt x={880} y={y + 46} size={12} fill="#fff">1</Txt>
    </g>
  );
}

function Callout({ y }) {
  return (
    <g fill="none" stroke="#ddd">
      <circle cx="996" cy={y} r="12" />
      <path d={`M967 ${y}h41`} />
      <Txt x={994} y={y - 1} size={11} fill="#ddd">1</Txt>
      <Txt x={994} y={y + 10} size={11} fill="#ddd">?3</Txt>
    </g>
  );
}

function TitleBlock() {
  return (
    <g fill="none" stroke={GREEN}>
      <path d="M1410 1026H1107v58" strokeWidth="2" />
      <path d="M1107 1046h303M1231 1026v58M1134.500 1046v38M1169 1046v38M1197.500 1046v38M1346.500 1046v38M1378.500 1046v38" strokeWidth="1.400" />
      <path d="M1107 1055.500h124M1107 1065h124M1107 1074.500h124M1346 1055.500h64M1346 1065h64M1346 1074.500h64" />
      {[1054, 1063, 1073, 1082].map((y, i) => (
        <Fragment key={y}>
          {i === 1 && <Txt x={1110} y={y} size={7}>?</Txt>}
          {i === 1 && <Txt x={1127} y={y} size={7}>?</Txt>}
          {i !== 1 && <Txt x={1108} y={y} size={7} anchor="start">?????</Txt>}
          <Txt x={1173} y={y} size={7}>?</Txt>
          <Txt x={1189} y={y} size={7}>?</Txt>
          {i === 0 && <Txt x={1357} y={y} size={7}>????</Txt>}
          {i > 0 && <Txt x={1352} y={y} size={7}>?</Txt>}
          {i > 0 && <Txt x={1369} y={y} size={7}>?</Txt>}
        </Fragment>
      ))}
      <Txt x={1238} y={1039} size={12}>?</Txt><Txt x={1254} y={1039} size={12}>?:</Txt>
      <Txt x={1237} y={1058} size={12}>?</Txt><Txt x={1253} y={1058} size={12}>?:</Txt>
      <Txt x={1381} y={1043} size={11}>????</Txt>
      <Txt x={1275} y={1077} size={16}>?????</Txt>
      <Txt x={1384} y={1063} size={8} weight={500} fill="#e6e619">??</Txt>
      <Txt x={1387} y={1073} size={8} weight={500} fill="#e6e619">2</Txt>
      <Txt x={1392} y={1083} size={8} weight={500} fill="#e6e619">200L3</Txt>
    </g>
  );
}

function Plan() {
  return (
    <svg viewBox="31 154 1536 1086" className="block h-auto w-full bg-black font-['Liberation_Sans_Narrow','Noto_Sans_CJK_SC',sans-serif]">
      <g fill="none" stroke={GREEN}>
        <rect x="292" y="299.500" width="1137.500" height="803.500" />
        <path d="M340 318.500h-38.500v143.500H340" strokeWidth="1.500" />
        <rect x="340" y="318.500" width="1070" height="765.500" stroke="#00ff00" strokeWidth="2.600" />
      </g>
      <Beam y={347.5} lineColor="#c8c8c8" purple="#8a008a" tail={1354} />
      <Beam y={912} lineColor="#a8a8a8" purple="#b400b4" tail={1367} />
      <g fill="none" stroke={GREEN}>
        <circle cx="936.500" cy="363" r="24" />
        <circle cx="936.500" cy="928" r="21.500" />
        <path d="M366.500 387v20M390.500 387v20M363 402.500h30M1307.500 387v20M1331.500 387v20M1305 402.500h29" />
        <path d="M363 970h972M366.500 950v24M1331.500 948v26" />
        {COLS.map((x, i) => (
          <g key={x}>
            <path d={`M${x} 948v41`} />
            <circle cx={x} cy="999" r="10" />
            <path d={TICK} transform={`translate(${x} 970)`} />
            <Txt x={x} y={1005} size={17} fill="#d400d4">{i + 1}</Txt>
          </g>
        ))}
        {[[366, 402], [390, 402], [1308, 402], [1332, 402], [366, 970], [1332, 970], [1371, 358], [1351, 358], [1371, 933], [1353, 933], [1353, 928], [1351, 364]].map(([x, y]) => (
          <path key={`${x}-${y}`} d={TICK} transform={`translate(${x} ${y})`} />
        ))}
        <path d="M1343 358.500h41M1371.500 358v575M1349 933h35M1351.500 354v14M1353 925v12" />
        <circle cx="1391" cy="358.500" r="6.500" />
        <circle cx="1391" cy="933" r="6.500" />
      </g>
      <path d="M949 384.500l18 27M946 908l21-33.500" stroke="#ddd" />
      <Callout y={411.5} />
      <Callout y={874.5} />
      <Txt x={378} y={400} size={8} weight={500}>2000</Txt>
      <Txt x={1320} y={400} size={8} weight={500}>2000</Txt>
      <Txt x={378} y={968} size={8} weight={500}>2000</Txt>
      <Txt x={1320} y={968} size={8} weight={500}>2000</Txt>
      {[481, 663, 845, 1031, 1217].map((x) => <Txt key={x} x={x} y={968} size={8} weight={500}>11400</Txt>)}
      <Txt x={1370} y={646} size={8} weight={500} rotate>34000</Txt>
      <Txt x={1355} y={372} size={8} rotate>300</Txt>
      <Txt x={1357} y={940} size={8} rotate>300</Txt>
      <Txt x={1391} y={362} size={11} fill="#d400d4">B</Txt>
      <Txt x={1391} y={937} size={11} fill="#d400d4">A</Txt>
      <Txt x={848} y={1057} size={20} weight={500} fill="#e0e0e0">基础平面布置图</Txt>
      <path d="M776 1064.500h145" stroke="#fff" strokeWidth="2.500" />
      <TitleBlock />
      <g fill="none" stroke="#ddd">
        <path d="M56.500 1167v47.500H104M59 1152l5 6 5-6M64 1158v6" />
        <rect x="52.500" y="1210" width="9" height="9" />
        <path d="M31 1199.500h1536M1514.500 154v1086" />
        <rect x="1509" y="1194" width="11.500" height="11.500" />
      </g>
    </svg>
  );
}

function ViewCube() {
  return (
    <svg viewBox="1420 164 140 170" className="absolute right-[7px] top-[10px] h-[170px] w-[140px] font-['Noto_Sans_CJK_SC',sans-serif]" textAnchor="middle">
      <circle cx="1488" cy="231" r="50" fill="none" stroke="#777" strokeOpacity=".34" strokeWidth="12" />
      <rect x="1465" y="207" width="48" height="48" fill="#a3a3a3" stroke="#8a8a8a" />
      <rect x="1474" y="216" width="30" height="30" fill="#979ba0" />
      <text x="1489" y="241" fontSize="28" fontWeight="300" fill="#2c2f33">上</text>
      <g fontSize="17" fontWeight="500" fill="#a0a0a0">
        <text x="1489" y="185">北</text>
        <text x="1436" y="238">西</text>
        <text x="1541" y="238">东</text>
        <text x="1489" y="291">南</text>
      </g>
      <rect x="1462" y="312.500" width="53" height="16" rx="3" fill="#7d7d87" stroke="#5c5c66" />
      <text x="1482" y="324" fontSize="10" fill="#b6b6bd">未命名</text>
      <path d="M1503 318h8l-4 4z" fill="none" stroke="#b6b6bd" />
    </svg>
  );
}

function CommandPanel() {
  return (
    <div className="absolute bottom-px left-px w-[232px] font-['Noto_Sans_Mono','DejaVu_Sans_Mono','Noto_Sans_CJK_SC',monospace] text-[12px] leading-[14px]">
      <div className="ml-[59px] flex flex-col items-start gap-[5px]">
        <p className="w-[126px] rounded-sm bg-[#4a4a4a] text-[#a5a5a5]">当前设置: 编辑模式 = Multiple</p>
        <p className="w-[164px] break-all rounded-sm bg-[#555] text-[#c2c2c2]">选择注释对象或 [放弃(U)/模式(M)]:</p>
        <p className="w-[164px] break-all rounded-sm bg-[#666] text-[#f0f0f0]">选择注释对象或 [放弃(U)/模式(M)]: *取消*</p>
      </div>
      <div className="mt-[3px] flex h-[23px] items-center bg-white/3">
        <span className="opacity-20"><Grip /></span>
        <Tool name="close" className="ml-1 h-5 w-[22px] opacity-20" icon="size-3" />
        <svg viewBox="0 0 16 16" className="ml-1 size-[14px]" stroke="#333" strokeWidth="3" fill="none"><path d="M1 15l8-8" /><path d="M14 3.500l-2 2-2-2 2-2c-3-.5-4.500 2-4 4.500 1 2 6 2.500 6.500-2.500z" strokeWidth="1.500" /></svg>
        <label className="ml-[5px] flex h-full flex-1 items-center bg-[#1a1a1a] pl-[3px]">
          <svg viewBox="0 0 24 12" className="h-3 w-6" fill="none" stroke="#3c3c3c"><path d="M1 1h14v10H1zM3 4l3 2-3 2M7 9h4" /><path d="M18 4h6l-3 4z" fill="#3c3c3c" stroke="none" /></svg>
          <input aria-label="命令" placeholder="键入命令" className="ml-[6px] w-28 bg-transparent italic placeholder:text-[#3a3a3a]" />
          <svg viewBox="0 0 6 4" className="ml-auto mr-1 h-1 w-[6px]" fill="#3c3c3c"><path d="M0 4h6L3 0z" /></svg>
        </label>
      </div>
    </div>
  );
}

function LayoutTabs() {
  return (
    <div className="flex h-[26px] items-start border-t-4 border-[#3b4453] pl-[14px] text-[11px] text-[#e4e6e9] box-content">
      <div className="flex h-[22px] items-center">
        <button type="button" aria-label="菜单" className="mr-3"><Icon name="menu" className="h-[14px] w-4" /></button>
        <div className="relative flex h-full w-[46px] items-center justify-center">
          <span className="absolute inset-0 -skew-x-[22deg] bg-[#3b4453]" />
          <button type="button" className="relative font-bold text-white">模型</button>
        </div>
        <button type="button" className="ml-[11px] mr-2">布局1</button>
        <Slash />
        <Tool name="plus" className="mx-[7px] size-4" icon="size-[13px]" />
        <Slash />
      </div>
    </div>
  );
}

const STATUS = [
  ['infer'], ['*dyn'], ['*ortho'], ['polar', 'v', 'iso', 'v'], ['track', '*osnap', 'v'], ['lwt'], ['*transp'], ['cycling'], ['osnap3d', 'v'],
  ['*ucs', 'filter', 'v', '*gizmo', 'v'], ['*anno', 'annoauto', 'annoone', '1:1 / 100%', 'v'], ['gear', 'v'], ['plus'],
  ['ruler', '小数', 'v'], ['quickp'], ['lockui', 'v'], ['isolate'], ['*perf'], ['trusted'], ['full'], ['menu'],
];

function StatusItem({ it }) {
  if (it === 'v') return <Caret className="w-[15px]" />;
  if (it === '小数') return <button type="button" className="w-14 pl-[6px] text-left">{it}</button>;
  if (it.startsWith('1:1')) return <button type="button" className="whitespace-nowrap px-px">{it}</button>;
  if (it === 'trusted') return <Tool name={it} className="h-[22px] w-7" />;
  if (it === 'menu') return <Tool name={it} className="h-[22px] w-6" />;
  if (it[0] === '*') return <Tool name={it.slice(1)} className="h-[22px] w-[22px] bg-[#5b8ec6]" />;
  return <Tool name={it} className="h-[22px] w-[22px]" />;
}

function StatusBar() {
  return (
    <footer className="flex gap-[2px] px-[2px] pb-[5px] pt-[2px] text-[11px] text-[#e8eaed]">
      <div className="mr-[2px] h-[22px] flex-1 bg-[#3b4453]" />
      <div className="flex h-[22px] items-center bg-[#3b4453] pl-6">
        <span className="whitespace-nowrap">294781.9434, 5756.9468, 0.0000</span>
        <button type="button" className="mx-2">模型</button>
        <StatusItem it="grid" /><StatusItem it="snap" /><StatusItem it="v" />
      </div>
      {STATUS.map((g) => (
        <div key={g[0]} className="flex h-[22px] items-center bg-[#3b4453]">
          {g.map((it, i) => <StatusItem key={i} it={it} />)}
        </div>
      ))}
    </footer>
  );
}

const MARKS = [[20, 386], [571, 386], [1122, 386], [-128, 749], [422, 749], [973, 749], [1523, 749], [272, 1114], [823, 1114], [1373, 1114]];

function Watermark() {
  return (
    <svg viewBox="0 0 1600 1300" className="pointer-events-none absolute inset-0 size-full font-['Noto_Sans','Noto_Sans_CJK_SC',sans-serif]">
      <g fontSize="34" fontWeight="500" strokeLinejoin="round">
        {MARKS.map(([x, y]) => (
          <g key={`${x}-${y}`} transform={`translate(${x} ${y}) rotate(-45)`} fill="#999" stroke="#999">
            <text strokeWidth="8" opacity=".14">知末网www.znzmo.com</text>
            <text strokeWidth="1" opacity=".09">知末网www.znzmo.com</text>
          </g>
        ))}
      </g>
      <g textAnchor="end">
        <text x="1530" y="1225" fontSize="61" fontWeight="700" fill="#c8c8c8">知末</text>
        <text x="1588" y="1271" fontSize="31" fontWeight="600" fill="#fff" stroke="#555" strokeWidth="2" paintOrder="stroke" className="font-['Open_Sans','Noto_Sans',sans-serif]">ID: 1189385239</text>
      </g>
    </svg>
  );
}

export default function App() {
  return (
    <div className="bg-[#30509a]">
      <div className="relative flex min-h-screen flex-col overflow-hidden rounded-lg border border-[#0b8bd0] bg-[#222933] px-[3px] font-['Noto_Sans','Noto_Sans_CJK_SC',sans-serif]">
        <TitleBar />
        <MenuBar />
        <FileTabs />
        <Toolbars />
        <main className="flex flex-1 bg-[#3b4453]">
          <div className="w-[27px] shrink-0"><SideBar items={DRAW} className="h-[420px]" /></div>
          <div className="relative min-w-0 flex-1 self-start">
            <Plan />
            <ViewCube />
            <CommandPanel />
          </div>
          <div className="w-[29px] shrink-0 pl-[3px]"><SideBar items={MODIFY} className="h-[379px]" /></div>
        </main>
        <LayoutTabs />
        <StatusBar />
        <Watermark />
      </div>
    </div>
  );
}
